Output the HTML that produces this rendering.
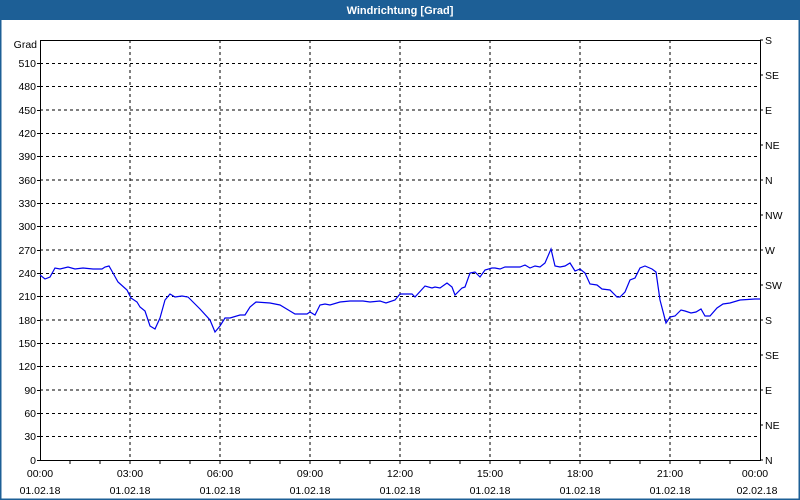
<!DOCTYPE html>
<html><head><meta charset="utf-8"><style>
html,body{margin:0;padding:0;background:#fff;}
svg{display:block;}
text{font-family:"Liberation Sans",sans-serif;font-size:10.5px;fill:#000;}
</style></head><body>
<svg width="800" height="500" viewBox="0 0 800 500" xmlns="http://www.w3.org/2000/svg">
<rect x="0" y="0" width="800" height="500" fill="#fff"/>
<rect x="0" y="0" width="800" height="20" fill="#1d5f96"/>
<rect x="0.75" y="0.75" width="798.5" height="498.5" fill="none" stroke="#1d5f96" stroke-width="1.5"/>
<text x="400" y="14" text-anchor="middle" style="fill:#fff;font-weight:bold;font-size:11px">Windrichtung [Grad]</text>
<g stroke="#000" stroke-width="1" stroke-dasharray="3,3" shape-rendering="crispEdges">
<line x1="40" y1="63.3" x2="760" y2="63.3"/><line x1="40" y1="86.7" x2="760" y2="86.7"/><line x1="40" y1="110" x2="760" y2="110"/>
<line x1="40" y1="133.3" x2="760" y2="133.3"/><line x1="40" y1="156.7" x2="760" y2="156.7"/><line x1="40" y1="180" x2="760" y2="180"/>
<line x1="40" y1="203.3" x2="760" y2="203.3"/><line x1="40" y1="226.7" x2="760" y2="226.7"/><line x1="40" y1="250" x2="760" y2="250"/>
<line x1="40" y1="273.3" x2="760" y2="273.3"/><line x1="40" y1="296.7" x2="760" y2="296.7"/><line x1="40" y1="320" x2="760" y2="320"/>
<line x1="40" y1="343.3" x2="760" y2="343.3"/><line x1="40" y1="366.7" x2="760" y2="366.7"/><line x1="40" y1="390" x2="760" y2="390"/>
<line x1="40" y1="413.3" x2="760" y2="413.3"/><line x1="40" y1="436.7" x2="760" y2="436.7"/>
<line x1="130" y1="40" x2="130" y2="460"/><line x1="220" y1="40" x2="220" y2="460"/><line x1="310" y1="40" x2="310" y2="460"/>
<line x1="400" y1="40" x2="400" y2="460"/><line x1="490" y1="40" x2="490" y2="460"/><line x1="580" y1="40" x2="580" y2="460"/><line x1="670" y1="40" x2="670" y2="460"/>
</g>
<g stroke="#000" stroke-width="1" shape-rendering="crispEdges" fill="none">
<path d="M40.5 40.5H760.5V460.5H40.5Z"/>
<path d="M70 460v4M100 460v4M130 460v4M160 460v4M190 460v4M220 460v4M250 460v4M280 460v4M310 460v4M340 460v4M370 460v4M400 460v4M430 460v4M460 460v4M490 460v4M520 460v4M550 460v4M580 460v4M610 460v4M640 460v4M670 460v4M700 460v4M730 460v4"/>
<path d="M760 75h3M760 110h3M760 145h3M760 180h3M760 215h3M760 250h3M760 285h3M760 320h3M760 355h3M760 390h3M760 425h3M760 460h3M760 40h3"/>
<path d="M37 63.5h3M37 86.5h3M37 110.5h3M37 133.5h3M37 156.5h3M37 180.5h3M37 203.5h3M37 226.5h3M37 250.5h3M37 273.5h3M37 296.5h3M37 320.5h3M37 343.5h3M37 366.5h3M37 390.5h3M37 413.5h3M37 436.5h3M37 460.5h3"/>
</g>
<polyline fill="none" stroke="#0000ee" stroke-width="1.2" points="40,275 45,279 50,277 55,268 60,269 68,267 75,269 83,268 93,269 102,269 105,267 109,266 113,273 118,282 127,290 131,298 137,302 140,307 145,311 150,326 155,329 160,318 165,300 170,294 175,297 182,296 188,297 193,302 200,309 210,320 215,332 220,326 225,318 230,318 240,315 245,315 250,307 256,302 270,303 280,305 290,311 295,314 307,314 310,312 315,315 320,305 325,304 330,305 340,302 350,301 363,301 370,302 380,301 386,303 395,300 400,294 412,294 415,297 425,286 432,288 435,287 440,288 447,283 452,287 455,295 462,288 465,287 470,273 475,272 480,277 485,270 492,268 495,268 500,269 505,267 520,267 525,265 530,268 535,266 540,267 545,263 551,249 555,266 560,267 565,266 570,263 575,271 580,269 585,273 590,284 597,285 602,289 610,290 617,297 620,297 625,292 630,280 635,278 640,268 645,266 652,269 656,272 660,300 666,323 670,317 675,316 681,310 685,311 691,313 696,312 701,309 705,316 710,316 717,308 723,304 730,303 740,300 755,299 760,299"/>
<g text-anchor="end">
<text x="37" y="48">Grad</text>
<text x="36" y="67">510</text><text x="36" y="90">480</text><text x="36" y="114">450</text><text x="36" y="137">420</text>
<text x="36" y="160">390</text><text x="36" y="184">360</text><text x="36" y="207">330</text><text x="36" y="230">300</text>
<text x="36" y="254">270</text><text x="36" y="277">240</text><text x="36" y="300">210</text><text x="36" y="324">180</text>
<text x="36" y="347">150</text><text x="36" y="370">120</text><text x="36" y="394">90</text><text x="36" y="417">60</text>
<text x="36" y="440">30</text><text x="36" y="464">0</text>
</g>
<g>
<text x="765" y="44">S</text><text x="765" y="79">SE</text><text x="765" y="114">E</text><text x="765" y="149">NE</text>
<text x="765" y="184">N</text><text x="765" y="219">NW</text><text x="765" y="254">W</text><text x="765" y="289">SW</text>
<text x="765" y="324">S</text><text x="765" y="359">SE</text><text x="765" y="394">E</text><text x="765" y="429">NE</text><text x="765" y="464">N</text>
</g>
<g text-anchor="middle">
<text x="40" y="477">00:00</text><text x="130" y="477">03:00</text><text x="220" y="477">06:00</text><text x="310" y="477">09:00</text>
<text x="400" y="477">12:00</text><text x="490" y="477">15:00</text><text x="580" y="477">18:00</text><text x="670" y="477">21:00</text><text x="755" y="477">00:00</text>
<text x="40" y="494">01.02.18</text><text x="130" y="494">01.02.18</text><text x="220" y="494">01.02.18</text><text x="310" y="494">01.02.18</text>
<text x="400" y="494">01.02.18</text><text x="490" y="494">01.02.18</text><text x="580" y="494">01.02.18</text><text x="670" y="494">01.02.18</text><text x="757" y="494">02.02.18</text>
</g>
</svg>
</body></html>
